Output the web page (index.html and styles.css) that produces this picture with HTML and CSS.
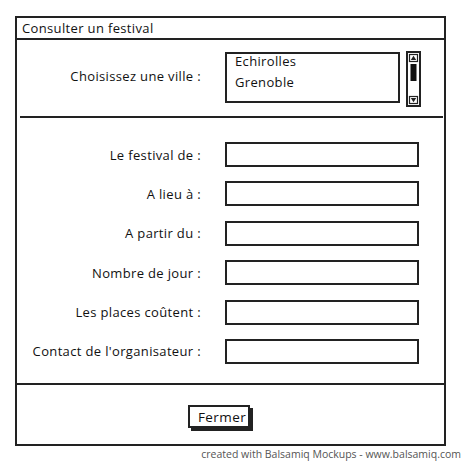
FILE: index.html
```html
<!DOCTYPE html>
<html lang="fr">

<head>
    <meta charset="UTF-8">
    <title>Consulter un festival</title>
    <link rel="stylesheet" href="styles.css">
</head>

<body>
    <div class="fenetre">
        <div class="titre">Consulter un festival</div>

        <div class="choix-ville">
            <label class="libelle libelle-ville">Choisissez une ville :</label>
            <div class="liste">
                <div class="item">Echirolles</div>
                <div class="item">Grenoble</div>
            </div>
            <svg class="scroll" width="15" height="56" viewBox="0 0 15 56">
                <rect x="1" y="1" width="13" height="54" fill="none" stroke="#222" stroke-width="2" />
                <rect x="3.5" y="3.5" width="8" height="7" fill="none" stroke="#222" stroke-width="1.2" />
                <polygon points="7.5,4.8 10.2,9 4.8,9" fill="#222" />
                <rect x="4.5" y="13" width="6" height="17" fill="#111" />
                <rect x="3.5" y="45.5" width="8" height="7" fill="none" stroke="#222" stroke-width="1.2" />
                <polygon points="4.8,47 10.2,47 7.5,51.2" fill="#222" />
            </svg>
        </div>

        <div class="separateur"></div>

        <div class="formulaire">
            <label class="libelle">Le festival de :</label>
            <div class="champ"></div>
            <label class="libelle">A lieu à :</label>
            <div class="champ"></div>
            <label class="libelle">A partir du :</label>
            <div class="champ"></div>
            <label class="libelle">Nombre de jour :</label>
            <div class="champ"></div>
            <label class="libelle">Les places coûtent :</label>
            <div class="champ"></div>
            <label class="libelle">Contact de l'organisateur :</label>
            <div class="champ"></div>
        </div>
    </div>

    <div class="pied">
        <button class="btn">Fermer</button>
    </div>

    <div class="credit">created with Balsamiq Mockups - www.balsamiq.com</div>
</body>

</html>
```

FILE: styles.css
```css
body {
    margin: 0;
    padding: 16px 0 0 15px;
    background-color: white;
    color: #111;
    font-family: "Open Sans", "DejaVu Sans", sans-serif;
    font-size: 13px;
    letter-spacing: 0.35px;
}

.fenetre {
    width: 427px;
    height: 365px;
    border: 2px solid #222;
}

.titre {
    height: 20px;
    line-height: 20px;
    padding-left: 5px;
    border-bottom: 2px solid #222;
}

.choix-ville {
    height: 76px;
    display: flex;
    align-items: center;
}

.libelle {
    width: 184px;
    text-align: right;
}

.libelle-ville {
    margin-bottom: 4px;
}

.liste {
    width: 163px;
    height: 47px;
    margin-left: 24px;
    margin-bottom: 2px;
    border: 2px solid #222;
    padding-left: 8px;
}

.item {
    height: 21px;
    line-height: 14px;
}

.scroll {
    margin-left: 6px;
    margin-top: 2px;
}

.separateur {
    margin: 0 1px 0 3px;
    border-bottom: 2px solid #222;
}

.formulaire {
    display: grid;
    grid-template-columns: 184px 194px;
    column-gap: 24px;
    row-gap: 14.4px;
    align-items: center;
    padding-top: 24px;
}

.champ {
    height: 21px;
    border: 2px solid #222;
}

.pied {
    width: 427px;
    height: 59px;
    border: 2px solid #222;
    border-top: 0;
    display: flex;
    align-items: center;
}

.btn {
    font-family: inherit;
    font-size: 13.5px;
    letter-spacing: 0.4px;
    color: #111;
    background-color: white;
    border: 2px solid #222;
    box-shadow: 3px 3px 0 #222;
    padding: 0 8px;
    width: 62px;
    height: 23px;
    margin-left: 171px;
    margin-top: 4px;
}

.credit {
    text-align: right;
    padding-right: 3px;
    margin-top: 1px;
    font-size: 10.5px;
    letter-spacing: 0;
    color: #555;
}
```
